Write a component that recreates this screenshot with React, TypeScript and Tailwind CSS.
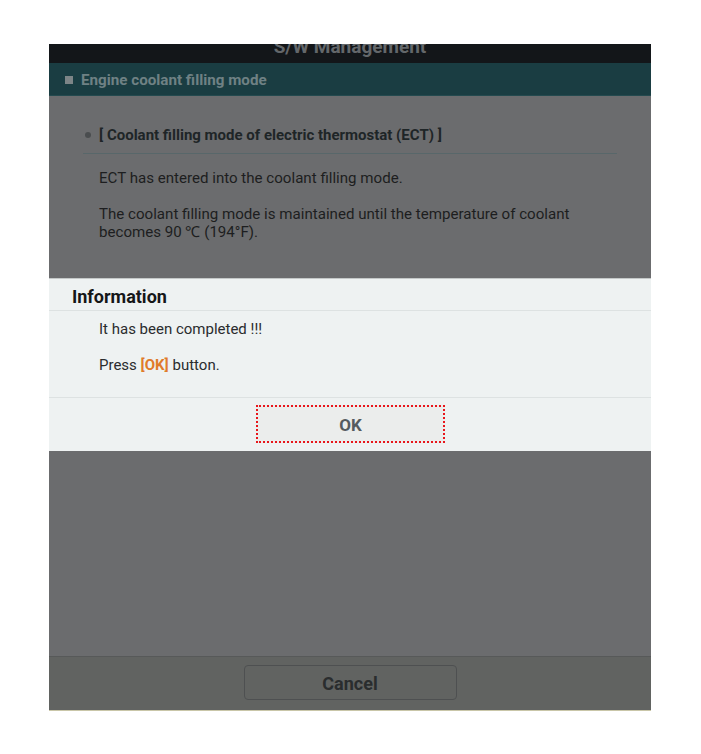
import React from "react";

const font = { fontFamily: "Roboto, 'Liberation Sans', sans-serif" };

export default function App() {
  return (
    <div className="w-[701px] h-[754px] bg-white pt-[44px] pl-[49px]" style={font}>
      <div className="relative w-[602px] h-[667px] flex flex-col border-b border-[#c9c6a8]">
        {/* Title bar */}
        <div className="h-[19px] bg-[#131619] overflow-hidden flex justify-center">
          <span className="text-[19px] font-bold text-[#63676a] leading-[22px] -mt-[8px]">S/W Management</span>
        </div>

        {/* Section header */}
        <div className="h-[33px] bg-[#1a3d42] border-b border-[#244a4f] flex items-center pl-[16px] gap-[8px] pt-[2px]">
          <span className="w-[8px] h-[8px] bg-[#7d8587]" />
          <span className="text-[15.2px] font-bold text-[#6f8184]">Engine coolant filling mode</span>
        </div>

        {/* Content (dimmed) */}
        <div className="flex-1 bg-[#6b6c6e] pt-[29px] px-[34px]">
          <div className="flex items-center gap-[8px] pl-[2px] h-[20px]">
            <span className="w-[6px] h-[6px] rounded-full bg-[#4a4d4f]" />
            <span className="text-[15px] font-bold text-[#1e2527]">[ Coolant filling mode of electric thermostat (ECT) ]</span>
          </div>
          <div className="mt-[8px] h-px bg-[#58676a]" />
          <div className="pl-[16px] pt-[15px] text-[15.1px] text-[#1d1e20] leading-[18px]">
            <p>ECT has entered into the coolant filling mode.</p>
            <p className="mt-[18px]">The coolant filling mode is maintained until the temperature of coolant<br />becomes 90 ℃ (194°F).</p>
          </div>
        </div>

        {/* Footer */}
        <div className="h-[54px] bg-[#616361] border-t border-[#575959] flex justify-center pt-[8px]">
          <div className="w-[213px] h-[35px] rounded-[4px] border border-[#4e5051] flex items-center justify-center text-[18px] font-bold text-[#2a2d2e] pt-[2px]">
            Cancel
          </div>
        </div>

        {/* Information dialog */}
        <div className="absolute left-0 right-0 top-[234px] h-[173px] bg-[#eef2f2] border-t border-[#c4c8c8] flex flex-col">
          <div className="h-[32px] border-b border-[#dde2e2] pl-[23px] flex items-center text-[18px] font-bold text-[#151718] pt-[3px]">
            Information
          </div>
          <div className="h-[87px] border-b border-[#dde2e2] pl-[50px] pt-[9px] text-[15px] text-[#2a2c2e] leading-[18px]">
            <p>It has been completed !!!</p>
            <p className="mt-[18px]">
              Press <span className="font-bold text-[#e07b2a]">[OK]</span> button.
            </p>
          </div>
          <div className="flex justify-center pt-[7px] pl-[1px]">
            <div className="w-[189px] h-[38px] border-2 border-dotted border-[#e8161b] bg-[#ebedec] flex items-center justify-center text-[17px] font-bold text-[#555b60] pt-[3px]">
              OK
            </div>
          </div>
        </div>
      </div>
    </div>
  );
}
